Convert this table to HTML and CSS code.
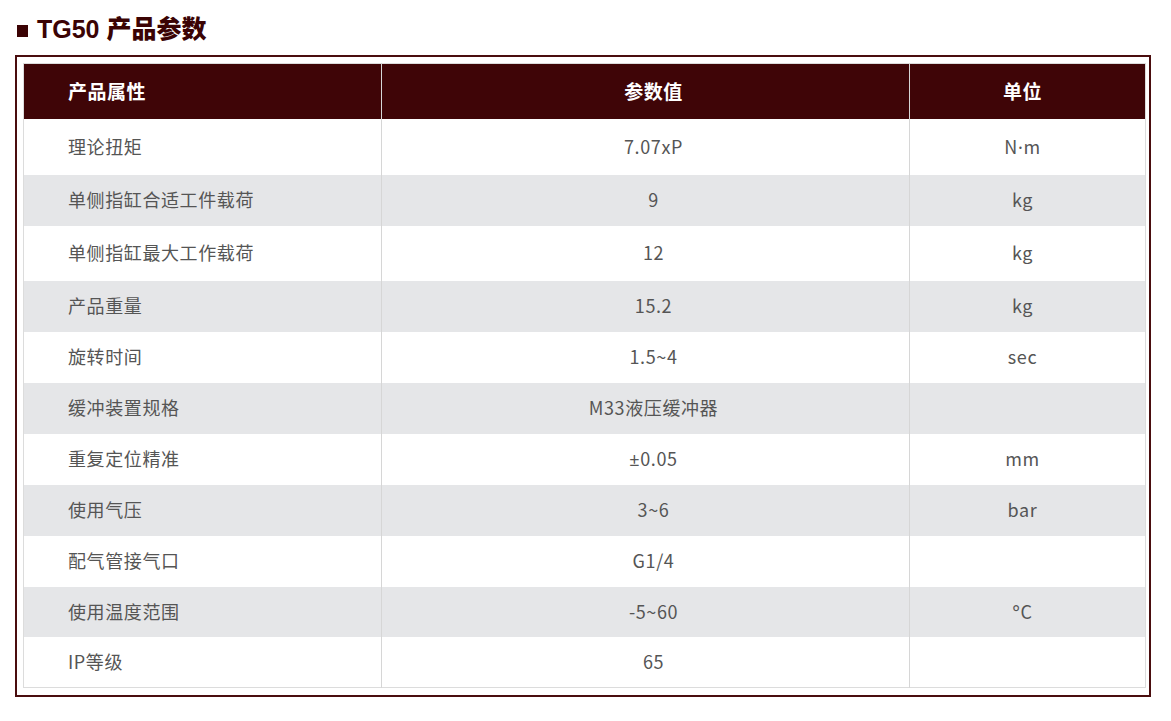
FILE: index.html
```html
<!DOCTYPE html>
<html lang="zh-CN">
<head>
<meta charset="utf-8">
<title>TG50 产品参数</title>
<link rel="stylesheet" href="styles.css">
</head>
<body>
<h1 class="title"><span class="bullet"></span><span class="title-text">TG50 产品参数</span></h1>
<div class="frame">
  <table class="spec">
    <colgroup>
      <col class="c1">
      <col class="c2">
      <col class="c3">
    </colgroup>
    <thead>
      <tr>
        <th class="attr">产品属性</th>
        <th class="val">参数值</th>
        <th class="unit">单位</th>
      </tr>
    </thead>
    <tbody>
      <tr class="r-tall"><td class="attr">理论扭矩</td><td class="val">7.07xP</td><td class="unit">N<span class="latin">·</span>m</td></tr>
      <tr><td class="attr">单侧指缸合适工件载荷</td><td class="val">9</td><td class="unit">kg</td></tr>
      <tr class="r-mid"><td class="attr">单侧指缸最大工作载荷</td><td class="val">12</td><td class="unit">kg</td></tr>
      <tr><td class="attr">产品重量</td><td class="val">15.2</td><td class="unit">kg</td></tr>
      <tr><td class="attr">旋转时间</td><td class="val">1.5~4</td><td class="unit">sec</td></tr>
      <tr><td class="attr">缓冲装置规格</td><td class="val">M33液压缓冲器</td><td class="unit"></td></tr>
      <tr><td class="attr">重复定位精准</td><td class="val"><span class="latin">±</span>0.05</td><td class="unit">mm</td></tr>
      <tr><td class="attr">使用气压</td><td class="val">3~6</td><td class="unit">bar</td></tr>
      <tr><td class="attr">配气管接气口</td><td class="val">G1/4</td><td class="unit"></td></tr>
      <tr class="r-short"><td class="attr">使用温度范围</td><td class="val">-5~60</td><td class="unit"><span class="latin">°</span>C</td></tr>
      <tr><td class="attr">IP等级</td><td class="val">65</td><td class="unit"></td></tr>
    </tbody>
  </table>
</div>
</body>
</html>
```

FILE: styles.css
```css
* { box-sizing: border-box; }

html, body {
  margin: 0;
  padding: 0;
  background: #ffffff;
}

body {
  font-family: "Noto Sans CJK SC", "Noto Sans", sans-serif;
  color: #555555;
}

.title {
  display: flex;
  align-items: center;
  height: 55px;
  margin: 0;
  padding: 0 0 0 17px;
  gap: 9px;
  color: #3b0304;
  font-family: "Liberation Sans", "Noto Sans CJK SC", sans-serif;
  font-weight: 900;
  font-size: 25px;
  line-height: 1;
}

.bullet {
  display: block;
  width: 11px;
  height: 12px;
  background: #3b0304;
  margin-top: 7px;
}

.title-text {
  display: block;
  margin-top: 3px;
}

.frame {
  margin-left: 15px;
  width: 1136px;
  border: 2px solid #4a0d0e;
  padding: 6px 3px 7px 6px;
}

.spec {
  width: 100%;
  border-collapse: collapse;
  table-layout: fixed;
  border: 1px solid #dcdcdc;
}

.c1 { width: 358px; }
.c2 { width: 528px; }

.spec th,
.spec td {
  padding: 0;
  border-left: 1px solid #d6d6d6;
  vertical-align: middle;
}

.spec th:first-child,
.spec td:first-child {
  border-left: none;
}

.spec thead tr {
  height: 55px;
  background: #3f0507;
}

.spec th {
  color: #ffffff;
  font-size: 19px;
  font-weight: 700;
  letter-spacing: 0.5px;
  padding-bottom: 2px;
}

.spec tbody tr {
  height: 51px;
  background: #ffffff;
}

.spec tbody tr:nth-child(even) {
  background: #e5e6e8;
}

.spec tbody tr.r-tall { height: 56px; }
.spec tbody tr.r-mid { height: 55px; }
.spec tbody tr.r-short { height: 50px; }

.spec td {
  font-size: 18px;
  letter-spacing: 0.6px;
  color: #555555;
  padding-bottom: 2px;
}

.latin {
  font-family: "Noto Sans", "Liberation Sans", sans-serif;
  letter-spacing: 0.6px;
}

.attr {
  text-align: left;
  padding-left: 44px !important;
}

.val {
  text-align: center;
  padding-left: 16px !important;
}

.unit {
  text-align: center;
  padding-right: 10px !important;
}
```
